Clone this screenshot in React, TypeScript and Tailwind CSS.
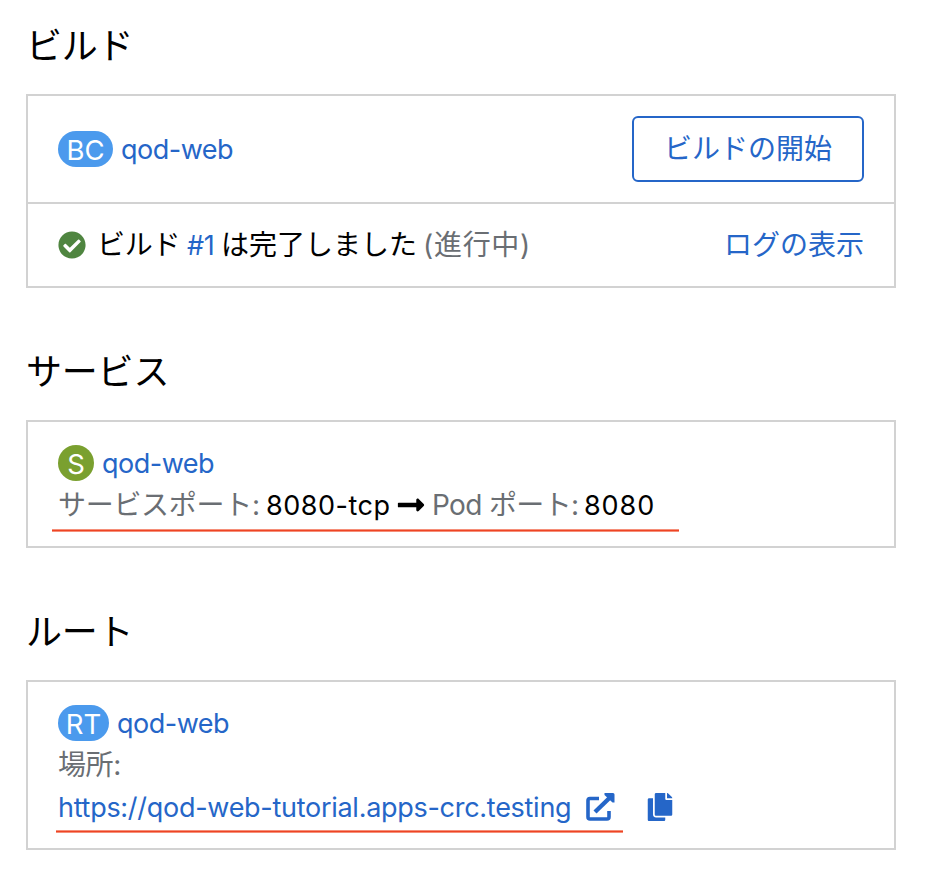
import React from "react";
import { FaCheckCircle, FaCopy, FaLongArrowAltRight } from "react-icons/fa";

function Section({ title, gap, children }: { title: string; gap: string; children: React.ReactNode }) {
  return (
    <section className={gap}>
      <h2 className="h-[52px] text-[36px] leading-[52px] tracking-[-0.2px] whitespace-nowrap">{title}</h2>
      {children}
    </section>
  );
}

function Badge({ label, tone }: { label: string; tone: string }) {
  return (
    <span className={"flex h-9 shrink-0 items-center justify-center rounded-full pt-px text-[27.5px] leading-[34px] text-white " + tone}>
      {label}
    </span>
  );
}

function Name() {
  return <a className="ml-2 pt-0.5 text-[27px] leading-[34px] tracking-[-0.5px] text-[#2566c8]">qod-web</a>;
}

function ExternalLink() {
  return (
    <svg className="ml-[14px] h-7 w-[29px] shrink-0" viewBox="0 0 29 28" fill="none" stroke="#2566c8">
      <path d="M13 5.500H4Q2 5.500 2 7.500V24Q2 26 4 26H21Q23 26 23 24V18" strokeWidth="3.600" />
      <path d="M9 19L24 4.500" strokeWidth="4.400" />
      <path d="M18.500 0H27Q28.500 0 28.500 1.500V9.500H26.500L18.500 2Z" fill="#2566c8" stroke="none" />
    </svg>
  );
}

export default function App() {
  return (
    <main className="h-[876px] w-[934px] overflow-hidden bg-white pl-[26px] pt-[20px] font-['Inter','Noto_Sans_CJK_JP',sans-serif] text-[28px] text-black">
      <Section title="ビルド" gap="">
        <div className="mt-[22px] h-[194px] w-[870px] border-2 border-[#d2d2d2]">
          <div className="flex h-[108px] items-center justify-between border-b-2 border-[#d2d2d2] px-[30px]">
            <div className="flex items-center">
              <Badge label="BC" tone="w-[55px] bg-[#4b9aed]" />
              <Name />
            </div>
            <button className="h-[66px] w-[232px] rounded-[6px] border-2 border-[#2566c8] text-[28px] leading-[60px] text-[#2566c8]">ビルドの開始</button>
          </div>
          <div className="flex h-[82px] items-center justify-between px-[30px] whitespace-nowrap">
            <div className="flex items-center">
              <FaCheckCircle className="mr-[11px] size-7 text-[#4f8540]" />
              <span className="w-[90px] tracking-[-0.3px]">ビルド</span>
              <a className="w-[34px] pt-0.5 text-[27px] tracking-[-0.3px] text-[#2566c8]">#1</a>
              <span>は完了しました</span>
              <span className="ml-[6px] tracking-[0.7px] text-[#6a6e73]">(進行中)</span>
            </div>
            <a className="text-[#2566c8]">ログの表示</a>
          </div>
        </div>
      </Section>
      <Section title="サービス" gap="mt-[58px]">
        <div className="mt-[22px] h-[128px] w-[870px] border-2 border-[#d2d2d2] pl-[30px] pt-[23px]">
          <div className="flex items-center">
            <Badge label="S" tone="w-9 bg-[#7aa02f]" />
            <Name />
          </div>
          <div className="mt-[3px] flex h-[42px] items-center whitespace-nowrap">
            <span className="w-[208px] tracking-[-0.3px] text-[#6a6e73]">サービスポート:</span>
            <span className="w-[130px] pt-[3px] text-[27px] tracking-[0.5px]">8080-tcp</span>
            <FaLongArrowAltRight className="mr-[6px] h-[30px] w-[30px]" />
            <span className="w-[152px] tracking-[-0.65px] text-[#6a6e73]">Pod ポート:</span>
            <span className="pt-[3px] text-[27px] tracking-[0.9px]">8080</span>
          </div>
          <div className="ml-[-6px] mt-[3px] h-[3px] w-[627px] border-y border-[#f58f79] bg-[#ee4424]" />
        </div>
      </Section>
      <Section title="ルート" gap="mt-[58px]">
        <div className="mt-[22px] h-[170px] w-[870px] border-2 border-[#d2d2d2] pl-[30px] pt-[23px]">
          <div className="flex items-center">
            <Badge label="RT" tone="w-[51px] bg-[#4b9aed]" />
            <Name />
          </div>
          <div className="mt-[3px] h-[42px] leading-[42px] tracking-[-0.4px] text-[#6a6e73]">場所:</div>
          <div className="flex h-[42px] items-center whitespace-nowrap text-[#2566c8]">
            <a className="w-[514px] pt-[3px] text-[27px] tracking-[-0.28px]">https://qod-web-tutorial.apps-crc.testing</a>
            <ExternalLink />
            <FaCopy className="ml-[32px] h-7 w-[26px]" />
          </div>
          <div className="ml-[-2px] mt-[2px] h-[3px] w-[567px] border-y border-[#f58f79] bg-[#ee4424]" />
        </div>
      </Section>
    </main>
  );
}
